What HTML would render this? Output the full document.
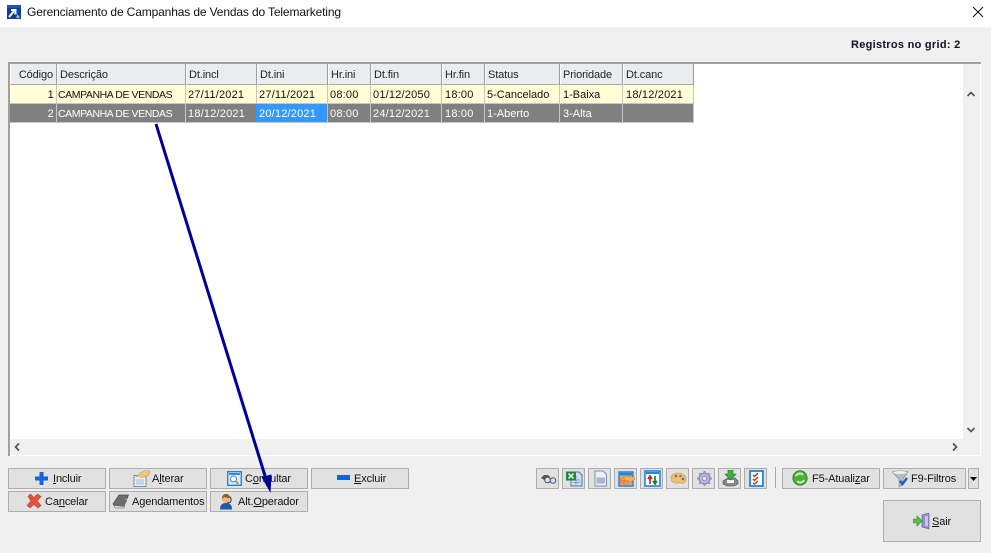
<!DOCTYPE html>
<html><head><meta charset="utf-8">
<style>
html,body{margin:0;padding:0;width:991px;height:553px;overflow:hidden;background:#f0f0f0;font-family:"Liberation Sans",sans-serif;font-size:11px;color:#000}
.a{position:absolute}
.h,.c{position:absolute;white-space:nowrap;box-sizing:border-box;overflow:hidden}
.h{top:64px;height:21px;background:#e9edf0;line-height:22px;padding-left:2px;border-right:1px solid #9c9c9c;border-left:1px solid #fff;border-bottom:1px solid #a8a8a8;letter-spacing:-.12px;color:#222}
.c{height:18px;line-height:20px;padding-left:3px;letter-spacing:.2px;color:#111}
.y{top:85px;background:#ffffd7}
.g{top:104px;background:#808080;color:#fff}
.b{position:absolute;box-sizing:border-box;background:#e1e1e1;border:1px solid #adadad;height:21px;line-height:20px;white-space:nowrap;font-size:11px;color:#111;letter-spacing:-.13px}
.b svg{position:absolute}
.b span{position:absolute;top:0}
.s svg{left:3px;top:1px}
u{text-underline-offset:1px}
</style></head><body>
<div class="a" style="left:0;top:0;width:991px;height:27px;background:#fff"></div>
<svg class="a" style="left:7px;top:5px" width="14" height="14" viewBox="0 0 14 14"><rect width="14" height="14" fill="#0f3f90"/><rect y="0" width="14" height="3" fill="#1b55b8"/><path d="M2 12L7 6M4 5h4.500v4.500" stroke="#fff" stroke-width="2" fill="none"/><path d="M9 13l1.500-4 1 1.500 1.500 2.500z" fill="#a9b9d6"/></svg>
<div class="a" style="left:27px;top:5px;font-size:12px;line-height:15px;white-space:nowrap;letter-spacing:-.14px;color:#111">Gerenciamento de Campanhas de Vendas do Telemarketing</div>
<svg class="a" style="left:972px;top:6px" width="12" height="12" viewBox="0 0 12 12"><path d="M1 1L11 11M11 1L1 11" stroke="#111" stroke-width="1"/></svg>
<div class="a" style="left:851px;top:38px;font-weight:bold;font-size:11px;line-height:14px;white-space:nowrap;letter-spacing:.28px;color:#101020">Registros no grid: 2</div>

<div class="a" style="left:8px;top:62px;width:973px;height:394px;background:#fff;border-top:2px solid #a0a0a0;border-left:2px solid #a0a0a0;box-sizing:border-box"></div>
<div class="a" style="left:963px;top:64px;width:17px;height:375px;background:#f0f0f0"></div>
<div class="a" style="left:10px;top:439px;width:970px;height:16px;background:#f0f0f0"></div>
<svg class="a" style="left:966px;top:90px" width="10" height="8"><path d="M1.500 6L5 2.500 8.500 6" stroke="#505050" stroke-width="1.600" fill="none"/></svg>
<svg class="a" style="left:966px;top:426px" width="10" height="8"><path d="M1.500 2L5 5.500 8.500 2" stroke="#505050" stroke-width="1.600" fill="none"/></svg>
<svg class="a" style="left:13px;top:442px" width="8" height="10"><path d="M6 1.500L2.500 5 6 8.500" stroke="#505050" stroke-width="1.600" fill="none"/></svg>
<svg class="a" style="left:951px;top:442px" width="8" height="10"><path d="M2 1.500L5.500 5 2 8.500" stroke="#505050" stroke-width="1.600" fill="none"/></svg>

<div class="a" style="left:10px;top:64px;width:684px;height:59px;background:#c6c6c6"></div>
<div class="h" style="left:10px;width:47px;text-align:right;padding-right:3px">Código</div>
<div class="h" style="left:57px;width:129px">Descrição</div>
<div class="h" style="left:186px;width:71px">Dt.incl</div>
<div class="h" style="left:257px;width:71px">Dt.ini</div>
<div class="h" style="left:328px;width:43px">Hr.ini</div>
<div class="h" style="left:371px;width:71px">Dt.fin</div>
<div class="h" style="left:442px;width:43px">Hr.fin</div>
<div class="h" style="left:485px;width:75px">Status</div>
<div class="h" style="left:560px;width:63px">Prioridade</div>
<div class="h" style="left:623px;width:71px">Dt.canc</div>

<div class="c y" style="left:10px;width:46px;text-align:right;padding-right:2px">1</div>
<div class="c y" style="left:57px;width:128px;padding-left:1px;font-size:10.5px;letter-spacing:-.42px">CAMPANHA DE VENDAS</div>
<div class="c y" style="left:186px;width:70px;padding-left:2px">27/11/2021</div>
<div class="c y" style="left:257px;width:70px;padding-left:2px">27/11/2021</div>
<div class="c y" style="left:328px;width:42px;padding-left:2px">08:00</div>
<div class="c y" style="left:371px;width:70px;padding-left:2px">01/12/2050</div>
<div class="c y" style="left:442px;width:42px;padding-left:3px">18:00</div>
<div class="c y" style="left:485px;width:74px;padding-left:2px;letter-spacing:0">5-Cancelado</div>
<div class="c y" style="left:560px;width:62px;padding-left:3px;letter-spacing:0">1-Baixa</div>
<div class="c y" style="left:623px;width:70px;padding-left:3px">18/12/2021</div>

<div class="c g" style="left:10px;width:46px;text-align:right;padding-right:2px">2</div>
<div class="c g" style="left:57px;width:128px;padding-left:1px;font-size:10.5px;letter-spacing:-.42px">CAMPANHA DE VENDAS</div>
<div class="c g" style="left:186px;width:70px;padding-left:2px">18/12/2021</div>
<div class="c g" style="left:256px;width:71px;background:#3399ff;padding-left:3px">20/12/2021</div>
<div class="c g" style="left:328px;width:42px;padding-left:2px">08:00</div>
<div class="c g" style="left:371px;width:70px;padding-left:2px">24/12/2021</div>
<div class="c g" style="left:442px;width:42px;padding-left:3px">18:00</div>
<div class="c g" style="left:485px;width:74px;padding-left:2px;letter-spacing:0">1-Aberto</div>
<div class="c g" style="left:560px;width:62px;padding-left:3px;letter-spacing:0">3-Alta</div>
<div class="c g" style="left:623px;width:70px"></div>

<!-- main buttons -->
<div class="b" style="left:8px;top:468px;width:98px"><svg style="left:26px;top:3px" width="13" height="13"><path d="M4.500 0h4v4.500H13v4H8.500V13h-4V8.500H0v-4h4.500z" fill="#1763d8"/></svg><span style="left:44px"><u>I</u>ncluir</span></div>
<div class="b" style="left:109px;top:468px;width:98px"><svg style="left:23px;top:1px" width="17" height="17"><rect x="1" y="5.500" width="12" height="11" fill="#eef2fa" stroke="#7d8ba0"/><rect x="3" y="9" width="8" height="6" fill="#c8d4e8"/><path d="M3 6.500l5-4 4-2 4.500.500.500 2.500-3 2.500-5 1.500z" fill="#f0c67a" stroke="#c49a4a" stroke-width=".6"/></svg><span style="left:42px">A<u>l</u>terar</span></div>
<div class="b" style="left:210px;top:468px;width:98px"><svg style="left:16px;top:2px" width="15" height="15"><rect x=".7" y=".7" width="13.600" height="13.600" fill="#dcecfb" stroke="#1f86dd" stroke-width="1.400"/><rect x="2" y="2" width="11" height="2" fill="#2f8fe0"/><circle cx="6.500" cy="8" r="3" fill="#fff" stroke="#5a7fa5"/><path d="M8.500 10l3 3" stroke="#c08040" stroke-width="1.600"/></svg><span style="left:34px">C<u>o</u>nsultar</span></div>
<div class="b" style="left:311px;top:468px;width:98px"><svg style="left:25px;top:6px" width="13" height="6"><rect width="13" height="5" fill="#1763d8"/></svg><span style="left:42px"><u>E</u>xcluir</span></div>
<div class="b" style="left:8px;top:491px;width:98px"><svg style="left:17px;top:1px" width="16" height="16"><path d="M2 3.500L4.500 1 8 4.500 11.500 1 15 3.500 11 8l4 4.500L12 15 8 11.500 4 15 1 12.500 5 8z" fill="#e5543a" stroke="#b8412c" stroke-width=".6"/></svg><span style="left:36px">Ca<u>n</u>celar</span></div>
<div class="b" style="left:109px;top:491px;width:98px"><svg style="left:2px;top:2px" width="17" height="15"><path d="M1 10L7 1h9.500L12 12.500H3z" fill="#6d6d6d" stroke="#4a4a4a" stroke-width=".7"/><path d="M2 11.500L3 14h9l.700-1.500z" fill="#e2e2e2" stroke="#555" stroke-width=".5"/><path d="M14 4l1 .500-.800 2-1-.500z" fill="#d9a036"/><path d="M13 7.500l1 .500-.800 2-1-.500z" fill="#d04030"/><path d="M12 10.500l1 .500-.600 1.500-1-.500z" fill="#5caa4a"/></svg><span style="left:22px">A<u>g</u>endamentos</span></div>
<div class="b" style="left:210px;top:491px;width:98px"><svg style="left:8px;top:1px" width="15" height="17"><path d="M1 16.500c0-4.500 2-6.500 6-6.500s6 2 6 6.500z" fill="#1d5ca8"/><circle cx="7" cy="6" r="4" fill="#f0b57a"/><path d="M3 6c0-4 2-5 4-5s4 1 4 4c-3 0-5-1-6-1-.500 1-1 1-2 2z" fill="#8a5a2a"/><path d="M11 4c1.500 1 1.500 4 0 5.500l-3 .500" stroke="#333" stroke-width="1" fill="none"/></svg><span style="left:27px">Alt.<u>O</u>perador</span></div>

<!-- small toolbar -->
<div class="b s" style="left:536px;top:468px;width:23px"><svg width="17" height="17"><path d="M1 8l3-3h4l2 2 1 4H6z" fill="#555"/><circle cx="7.500" cy="10" r="2.800" fill="#dfe6ee" stroke="#555"/><circle cx="13" cy="10.500" r="2.800" fill="#cfe0f0" stroke="#557"/></svg></div>
<div class="b s" style="left:562px;top:468px;width:23px"><svg width="17" height="17"><path d="M5 2h8l3 3v11H5z" fill="#cfdff2" stroke="#4f78aa"/><path d="M7 10h7M7 12.500h7M10 6v9" stroke="#7da0c8"/><rect x="0" y="1.500" width="10" height="9" fill="#1e8a3c"/><path d="M2.500 3.500l5 5M7.500 3.500l-5 5" stroke="#fff" stroke-width="1.400"/></svg></div>
<div class="b s" style="left:588px;top:468px;width:23px"><svg width="17" height="17"><path d="M3 1h8l3.500 3.500V16H3z" fill="#eef2f8" stroke="#7f8cae"/><rect x="4.500" y="7.500" width="8.500" height="6" fill="#a9b4d6"/></svg></div>
<div class="b s" style="left:614px;top:468px;width:23px"><svg width="17" height="17"><rect x="1" y="2" width="14" height="14" fill="#f5a060" stroke="#1f86dd" stroke-width="1.500"/><rect x="2" y="3" width="12" height="2.500" fill="#1f86dd"/><path d="M5 7h11l1 2-4 3H8z" fill="#e8b860" stroke="#b98a3a" stroke-width=".6"/><path d="M3 8v6M6 11v4M9 13v2M3 11h8" stroke="#e06030" stroke-width=".7"/></svg></div>
<div class="b s" style="left:640px;top:468px;width:23px"><svg width="17" height="17"><rect x="1" y="1" width="15" height="15" fill="#fff" stroke="#1f86dd" stroke-width="1.600"/><rect x="2" y="2" width="13" height="2" fill="#1f86dd"/><path d="M6 14V7M4 9l2-3 2 3" stroke="#d02020" stroke-width="1.700" fill="none"/><path d="M11 6v7M9 11l2 3 2-3" stroke="#108030" stroke-width="1.700" fill="none"/></svg></div>
<div class="b s" style="left:666px;top:468px;width:23px"><svg width="17" height="17"><path d="M1 8c0-3 3-5 7-5s8 2 8 6-3 5-5 4-3 1-6 0-4-2-4-5z" fill="#ecc078" stroke="#c89a50" stroke-width=".6"/><circle cx="6" cy="6" r="1.300" fill="#d05050"/><circle cx="10.500" cy="6" r="1.300" fill="#50a850"/><circle cx="13" cy="9" r="1.300" fill="#5070c8"/></svg></div>
<div class="b s" style="left:692px;top:468px;width:23px"><svg width="17" height="17"><circle cx="8.500" cy="8.500" r="5.500" fill="#b4b8dc" stroke="#7c80ac" stroke-width="1"/><circle cx="8.500" cy="8.500" r="2.200" fill="#e1e1e1" stroke="#7c80ac" stroke-width=".7"/><path d="M8.500 1v3M8.500 13v3M1 8.500h3M13 8.500h3M3.200 3.200l2 2M11.800 11.800l2 2M13.800 3.200l-2 2M5.200 11.800l-2 2" stroke="#8f93bd" stroke-width="2"/></svg></div>
<div class="b s" style="left:718px;top:468px;width:23px"><svg width="17" height="17"><path d="M1 11l5-3h7l3 3v3l-4 2H5l-4-2z" fill="#888" stroke="#444" stroke-width=".6"/><rect x="5" y="10" width="7" height="3" fill="#f2f2f2"/><path d="M6 0h5v4h3l-5.500 6L3 4h3z" fill="#3fae3f" stroke="#1d7a2a" stroke-width=".6"/></svg></div>
<div class="b s" style="left:744px;top:468px;width:23px"><svg width="17" height="17"><rect x="2" y="1" width="13" height="15" fill="#fff" stroke="#1f86dd" stroke-width="1.800"/><path d="M5 5l1.500 1.500L10 3M5 9l1.500 1.500L10 7M5 13l1.500 1L10 11" stroke="#d02828" stroke-width="1.400" fill="none"/></svg></div>

<div class="a" style="left:775px;top:467px;width:1px;height:21px;background:#a8a8a8"></div>
<div class="b" style="left:782px;top:468px;width:98px"><svg style="left:9px;top:1px" width="16" height="16"><circle cx="8" cy="8" r="7.200" fill="#4caf38" stroke="#2a7d22" stroke-width=".8"/><path d="M4 6c1-2.500 5-3.500 7-1M12 10c-1 2.500-5 3.500-7 1" stroke="#cdeec0" stroke-width="2" fill="none"/></svg><span style="left:29px">F5-Atuali<u>z</u>ar</span></div>
<div class="b" style="left:883px;top:468px;width:83px"><svg style="left:8px;top:1px" width="17" height="18"><path d="M0 2c2-1.500 14-1.500 16 0l-5 7v6l-4 2V9z" fill="#b4b8c0" stroke="#888" stroke-width=".6"/><ellipse cx="8" cy="2.500" rx="7" ry="1.500" fill="#eef0f4"/><path d="M8 11l2.500 3L15 8" stroke="#1c5cc4" stroke-width="2.400" fill="none"/></svg><span style="left:27px">F9-Filtros</span></div>
<div class="b" style="left:968px;top:468px;width:11px"><svg style="left:1px;top:8px" width="7" height="4"><path d="M0 0h7L3.500 4z" fill="#000"/></svg></div>
<div class="b" style="left:883px;top:500px;width:98px;height:42px"><svg style="left:29px;top:12px" width="18" height="17"><path d="M9 2l7-2v16l-7-2z" fill="#8f92c4" stroke="#5a5c8a" stroke-width=".6"/><rect x="12" y="3" width="3" height="10" fill="#c4c6e2"/><path d="M0 6h4V3l5 5-5 5v-3H0z" fill="#56c04a" stroke="#2a8a2a" stroke-width=".6"/></svg><span style="left:48px;top:11px"><u>S</u>air</span></div>

<!-- arrow -->
<svg class="a" style="left:0;top:0;pointer-events:none" width="991" height="553"><path d="M156 124L266 479" stroke="#000099" stroke-width="3" fill="none"/><path d="M270.500 493L261.500 477 271.500 474.500z" fill="#000099"/></svg>
</body></html>
